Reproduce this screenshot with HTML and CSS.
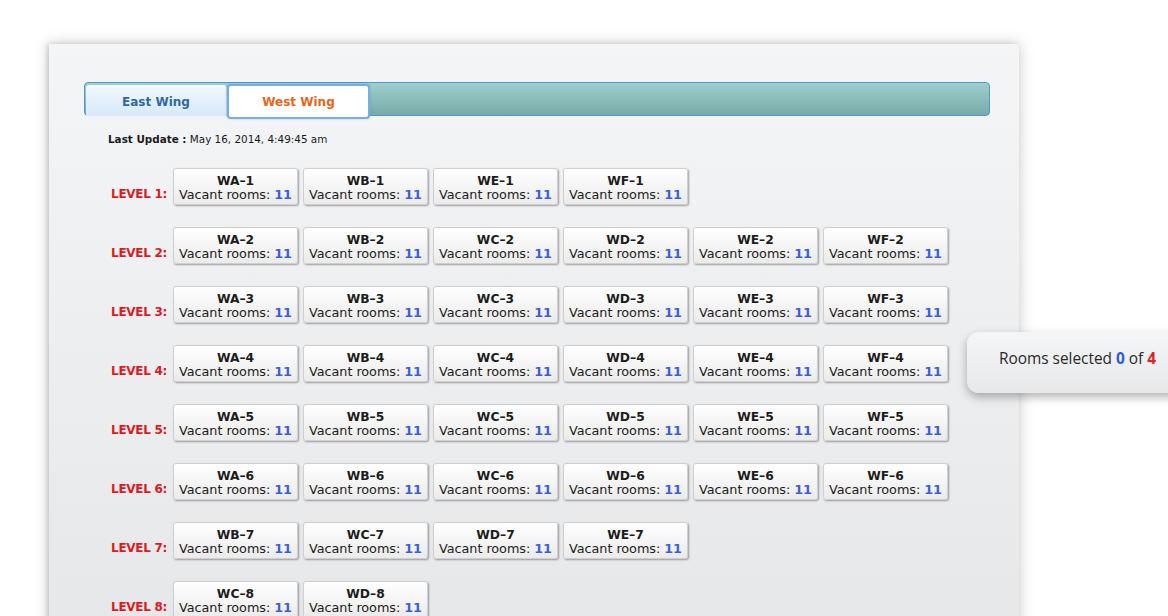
FILE: index.html
```html
<!DOCTYPE html>
<html>
<head>
<meta charset="utf-8">
<link rel="stylesheet" href="styles.css">
</head>
<body>
<div class="panel">
  <div class="tabbar">
    <div class="tab tab-east">East Wing</div>
    <div class="tab tab-west">West Wing</div>
  </div>
  <div class="update"><b>Last Update :</b> May 16, 2014, 4:49:45 am</div>
  <div class="levels">
    <div class="level"><div class="label">LEVEL 1:</div>
      <div class="room"><b>WA–1</b><span>Vacant rooms: <em>11</em></span></div>
      <div class="room"><b>WB–1</b><span>Vacant rooms: <em>11</em></span></div>
      <div class="room"><b>WE–1</b><span>Vacant rooms: <em>11</em></span></div>
      <div class="room"><b>WF–1</b><span>Vacant rooms: <em>11</em></span></div>
    </div>
    <div class="level"><div class="label">LEVEL 2:</div>
      <div class="room"><b>WA–2</b><span>Vacant rooms: <em>11</em></span></div>
      <div class="room"><b>WB–2</b><span>Vacant rooms: <em>11</em></span></div>
      <div class="room"><b>WC–2</b><span>Vacant rooms: <em>11</em></span></div>
      <div class="room"><b>WD–2</b><span>Vacant rooms: <em>11</em></span></div>
      <div class="room"><b>WE–2</b><span>Vacant rooms: <em>11</em></span></div>
      <div class="room"><b>WF–2</b><span>Vacant rooms: <em>11</em></span></div>
    </div>
    <div class="level"><div class="label">LEVEL 3:</div>
      <div class="room"><b>WA–3</b><span>Vacant rooms: <em>11</em></span></div>
      <div class="room"><b>WB–3</b><span>Vacant rooms: <em>11</em></span></div>
      <div class="room"><b>WC–3</b><span>Vacant rooms: <em>11</em></span></div>
      <div class="room"><b>WD–3</b><span>Vacant rooms: <em>11</em></span></div>
      <div class="room"><b>WE–3</b><span>Vacant rooms: <em>11</em></span></div>
      <div class="room"><b>WF–3</b><span>Vacant rooms: <em>11</em></span></div>
    </div>
    <div class="level"><div class="label">LEVEL 4:</div>
      <div class="room"><b>WA–4</b><span>Vacant rooms: <em>11</em></span></div>
      <div class="room"><b>WB–4</b><span>Vacant rooms: <em>11</em></span></div>
      <div class="room"><b>WC–4</b><span>Vacant rooms: <em>11</em></span></div>
      <div class="room"><b>WD–4</b><span>Vacant rooms: <em>11</em></span></div>
      <div class="room"><b>WE–4</b><span>Vacant rooms: <em>11</em></span></div>
      <div class="room"><b>WF–4</b><span>Vacant rooms: <em>11</em></span></div>
    </div>
    <div class="level"><div class="label">LEVEL 5:</div>
      <div class="room"><b>WA–5</b><span>Vacant rooms: <em>11</em></span></div>
      <div class="room"><b>WB–5</b><span>Vacant rooms: <em>11</em></span></div>
      <div class="room"><b>WC–5</b><span>Vacant rooms: <em>11</em></span></div>
      <div class="room"><b>WD–5</b><span>Vacant rooms: <em>11</em></span></div>
      <div class="room"><b>WE–5</b><span>Vacant rooms: <em>11</em></span></div>
      <div class="room"><b>WF–5</b><span>Vacant rooms: <em>11</em></span></div>
    </div>
    <div class="level"><div class="label">LEVEL 6:</div>
      <div class="room"><b>WA–6</b><span>Vacant rooms: <em>11</em></span></div>
      <div class="room"><b>WB–6</b><span>Vacant rooms: <em>11</em></span></div>
      <div class="room"><b>WC–6</b><span>Vacant rooms: <em>11</em></span></div>
      <div class="room"><b>WD–6</b><span>Vacant rooms: <em>11</em></span></div>
      <div class="room"><b>WE–6</b><span>Vacant rooms: <em>11</em></span></div>
      <div class="room"><b>WF–6</b><span>Vacant rooms: <em>11</em></span></div>
    </div>
    <div class="level"><div class="label">LEVEL 7:</div>
      <div class="room"><b>WB–7</b><span>Vacant rooms: <em>11</em></span></div>
      <div class="room"><b>WC–7</b><span>Vacant rooms: <em>11</em></span></div>
      <div class="room"><b>WD–7</b><span>Vacant rooms: <em>11</em></span></div>
      <div class="room"><b>WE–7</b><span>Vacant rooms: <em>11</em></span></div>
    </div>
    <div class="level"><div class="label">LEVEL 8:</div>
      <div class="room"><b>WC–8</b><span>Vacant rooms: <em>11</em></span></div>
      <div class="room"><b>WD–8</b><span>Vacant rooms: <em>11</em></span></div>
    </div>
  </div>
</div>
<div class="toast">Rooms selected <b class="sel">0</b> of <b class="tot">4</b></div>
</body>
</html>
```

FILE: styles.css
```css
html, body {
  margin: 0;
  padding: 0;
  background: #ffffff;
  height: 616px;
  overflow: hidden;
}
body {
  font-family: "DejaVu Sans", Verdana, sans-serif;
  color: #1e1e1e;
}
.panel {
  margin: 44px 0 0 49px;
  width: 970px;
  height: 700px;
  box-sizing: border-box;
  padding: 38px 29px 0 35px;
  background: linear-gradient(#f4f5f7, #e6e7e9 600px);
  box-shadow: 0 0 14px rgba(0,0,0,0.22), -2px 0 4px rgba(0,0,0,0.12);
}
.tabbar {
  height: 34px;
  box-sizing: border-box;
  border: 1px solid #4d97dc;
  border-radius: 4px;
  background: linear-gradient(#9dcfcc, #78aaa7);
  display: flex;
  align-items: flex-start;
  padding: 2px 0 0 1px;
}
.tab {
  font-size: 12px;
  font-weight: bold;
  text-align: center;
  box-sizing: border-box;
}
.tab-east {
  width: 141px;
  height: 31px;
  line-height: 34px;
  color: #2e6a9f;
  background: linear-gradient(#f2f8fe, #d6e9f9);
  border-radius: 3px 3px 0 0;
  border-right: 1px solid #b9d3ea;
}
.tab-west {
  width: 143px;
  height: 35px;
  line-height: 32px;
  margin-top: -1px;
  color: #e8651a;
  background: #ffffff;
  border: 2px solid #79aee2;
  border-radius: 4px;
  box-shadow: 0 0 2px rgba(80,140,210,0.5);
}
.update {
  font-size: 10.4px;
  margin: 16px 0 0 24px;
  line-height: 14px;
  color: #1a1a1a;
}
.update b { font-weight: bold; }
.levels {
  margin-top: 22px;
}
.level {
  display: flex;
  align-items: flex-end;
  gap: 5px;
  margin-bottom: 22px;
}
.label {
  width: 83px;
  margin-right: 1px;
  text-align: right;
  color: #dc1a1f;
  font-size: 12px;
  font-weight: bold;
  line-height: 14px;
  padding-bottom: 4px;
  letter-spacing: -0.3px;
}
.room {
  width: 125px;
  height: 37px;
  box-sizing: border-box;
  border: 1px solid #cfcfcf;
  border-radius: 3px;
  background: linear-gradient(#ffffff, #ebebeb);
  box-shadow: 1px 1px 2px rgba(0,0,0,0.35);
  display: flex;
  flex-direction: column;
  align-items: center;
  justify-content: center;
  padding-top: 2px;
}
.room b {
  font-size: 12.3px;
  font-weight: bold;
  line-height: 14px;
  color: #1c1c1c;
}
.room span {
  font-size: 12.8px;
  line-height: 14px;
  white-space: nowrap;
  letter-spacing: -0.05px;
  color: #1c1c1c;
}
.room em {
  font-style: normal;
  font-weight: bold;
  color: #3d5fd6;
}
.toast {
  position: absolute;
  left: 967px;
  top: 332px;
  width: 240px;
  height: 61px;
  box-sizing: border-box;
  padding-left: 32px;
  line-height: 54px;
  border-radius: 12px;
  background: linear-gradient(#f4f5f7, #e7e8ea);
  box-shadow: 0 4px 10px rgba(0,0,0,0.3);
  font-family: "Open Sans", "Noto Sans", sans-serif;
  font-size: 15.4px;
  color: #2a2a2a;
}
.toast .sel { color: #2b5bd6; }
.toast .tot { color: #e02424; }
```
